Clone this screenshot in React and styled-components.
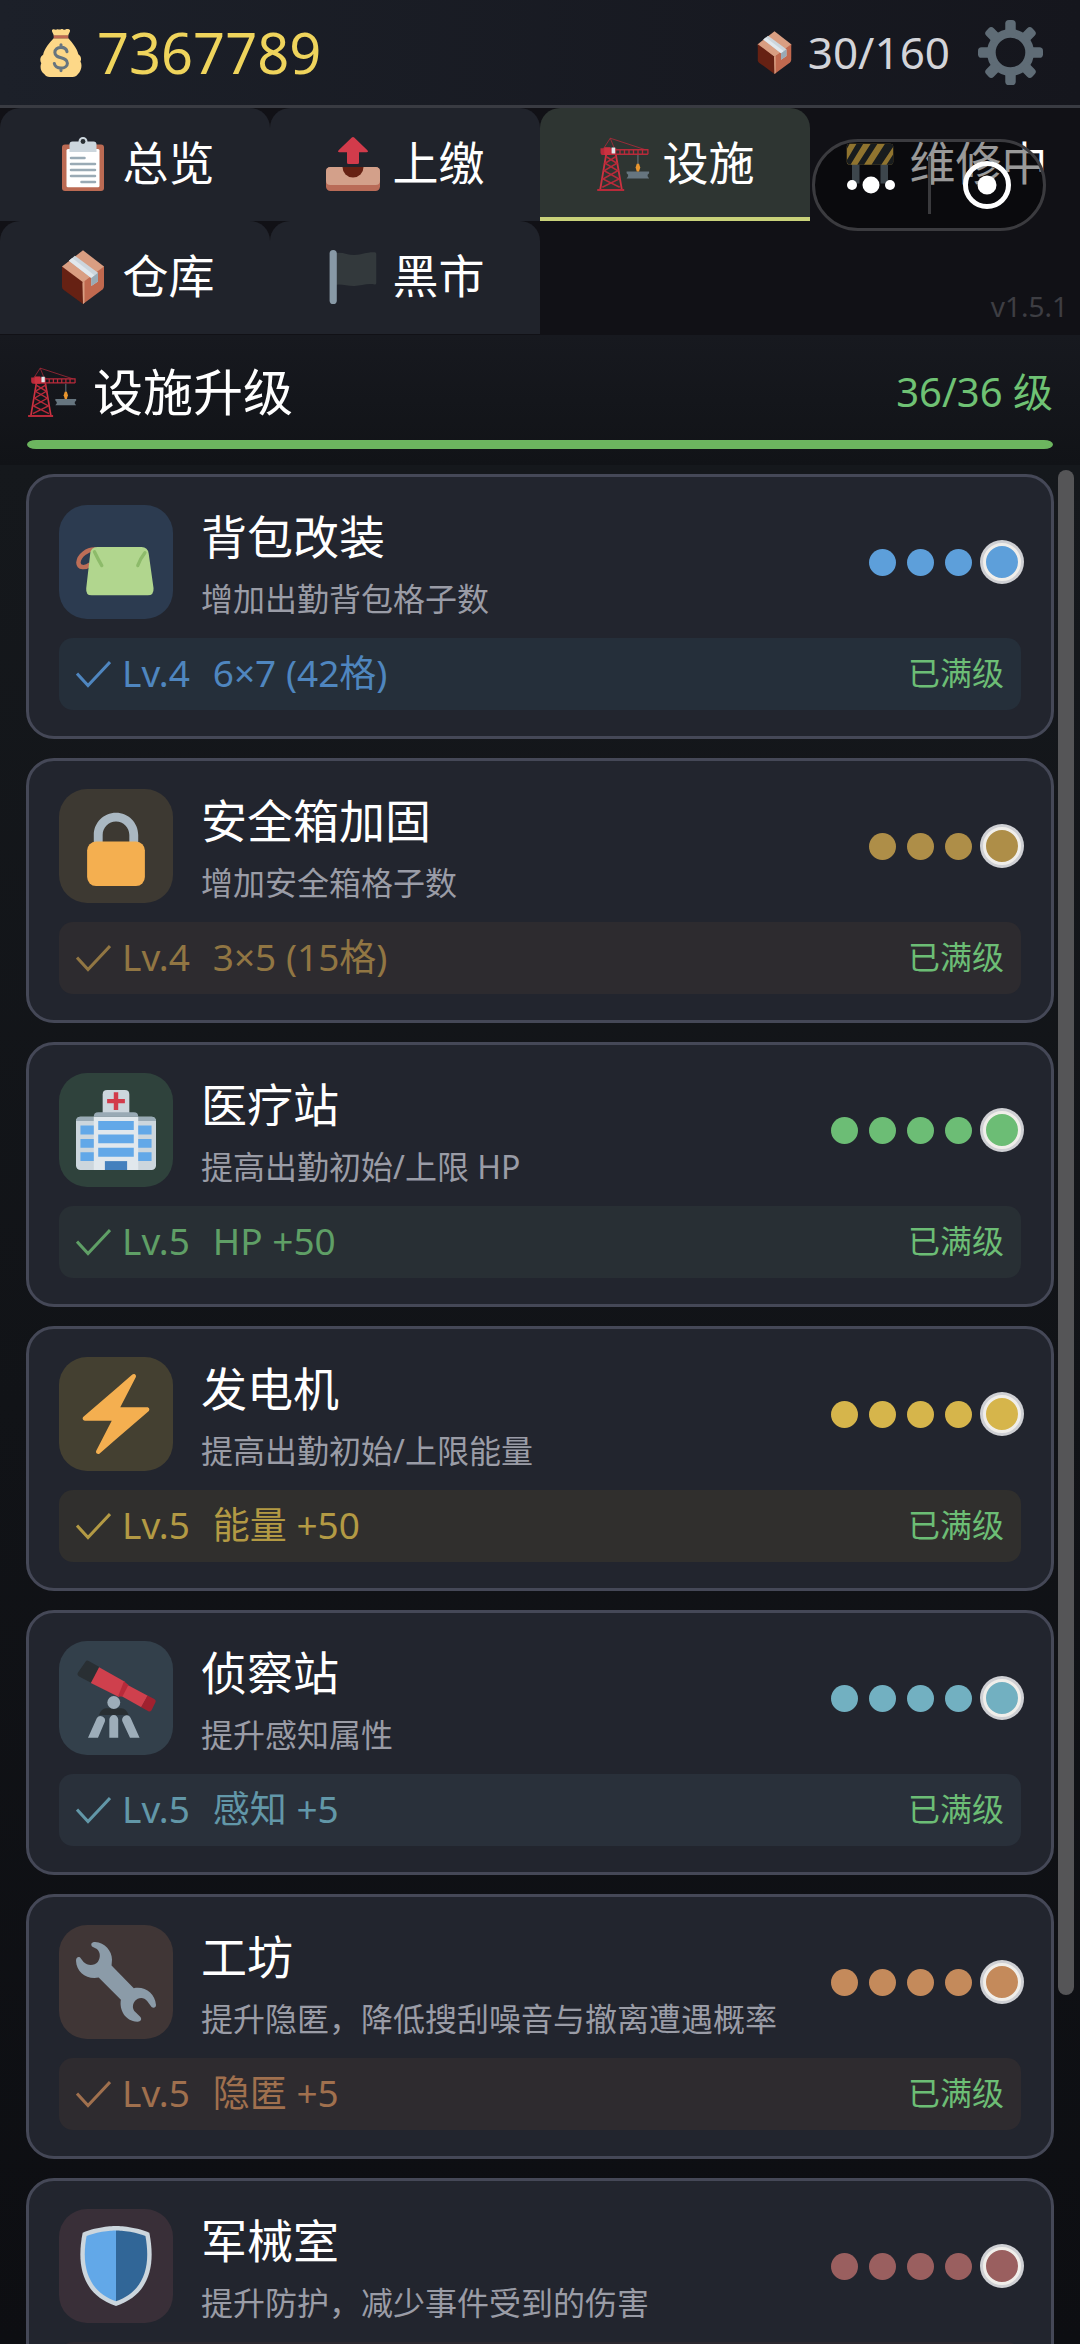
import React from "react";
import styled, { createGlobalStyle } from "styled-components";

const GlobalStyle = createGlobalStyle`
  * {
    box-sizing: border-box;
  }
  body {
    margin: 0;
    background: #111317;
    font-family: "Noto Sans", "Noto Sans CJK SC", sans-serif;
    color: #ffffff;
  }
  button {
    font-family: inherit;
    color: inherit;
    border: none;
    padding: 0;
    background: none;
    cursor: pointer;
  }
  svg {
    display: block;
    flex: none;
  }
`;

const Page = styled.div`
  position: relative;
  height: 100vh;
  display: flex;
  flex-direction: column;
  overflow: hidden;
`;

const Header = styled.header`
  height: 108px;
  flex: none;
  display: flex;
  align-items: center;
  justify-content: space-between;
  padding: 0 37px;
  border-bottom: 3px solid #393b42;
  background: linear-gradient(90deg, #1c2029, #15161d);
`;

const HeaderGroup = styled.div`
  display: flex;
  align-items: center;
  gap: 28px;
`;

const Stat = styled.div`
  display: flex;
  align-items: center;
  gap: 12px;
`;

const Money = styled.span`
  padding-bottom: 2px;
  font-size: 56px;
  line-height: 60px;
  color: #efd45c;
`;

const Capacity = styled.span`
  padding-bottom: 2px;
  font-size: 44px;
  line-height: 60px;
  color: #d3d4d9;
`;

const Tabs = styled.nav`
  flex: none;
  display: grid;
  grid-template-columns: repeat(4, 1fr);
  padding-bottom: 1px;
  background: #111116;
`;

const Tab = styled.button`
  height: 113px;
  display: flex;
  align-items: center;
  justify-content: center;
  gap: 13px;
  white-space: nowrap;
  padding-top: 2px;
  font-size: 46px;
  line-height: 60px;
  border-radius: 20px 20px 0 0;
  background: ${(p) => (p.$active ? "#2e3532" : p.$plain ? "none" : "#20232b")};
  border-bottom: 4px solid ${(p) => (p.$active ? "#c9d27a" : "transparent")};
`;

const TabLabel = styled.span`
  padding-bottom: 3px;
`;

const Version = styled.span`
  grid-column: 4;
  align-self: end;
  justify-self: end;
  padding: 0 12px 8px 0;
  font-size: 28px;
  line-height: 40px;
  color: #3e3e43;
`;

const Capsule = styled.div`
  position: absolute;
  top: 139px;
  right: 34px;
  width: 234px;
  height: 92px;
  display: flex;
  align-items: center;
  border: 3px solid #3b3b3f;
  border-radius: 46px;
  background: rgba(0, 0, 0, 0.4);
`;

const CapsuleButton = styled.button`
  flex: 1;
  display: flex;
  justify-content: center;
`;

const Divider = styled.span`
  width: 3px;
  height: 58px;
  background: #3a3a3d;
`;

const Section = styled.section`
  flex: none;
  padding: 22px 27px 16px;
  background: linear-gradient(#17191f, #111317);
`;

const SectionRow = styled.div`
  display: flex;
  align-items: center;
  gap: 16px;
  height: 70px;
  margin-bottom: 13px;
`;

const SectionTitle = styled.h1`
  flex: 1;
  margin: 0;
  font-size: 50px;
  line-height: 60px;
  font-weight: 400;
`;

const SectionCount = styled.span`
  font-size: 40px;
  line-height: 60px;
  color: #6fc274;
`;

const Track = styled.div`
  height: 9px;
  border-radius: 10px / 5px;
  background: #2c3036;
  overflow: hidden;
`;

const Fill = styled.div`
  height: 100%;
  background: #6cb55f;
`;

const Scroller = styled.main`
  flex: 1;
  min-height: 0;
  display: flex;
  background: linear-gradient(#15181c, #0d0e12);
`;

const List = styled.div`
  flex: 1;
  display: flex;
  flex-direction: column;
  gap: 19px;
  padding: 9px 4px 24px 26px;
  overflow-y: auto;
  scrollbar-width: none;
`;

const Rail = styled.div`
  width: 22px;
  padding: 5px 6px 0 0;
`;

const Thumb = styled.div`
  height: 81.4%;
  border-radius: 8px;
  background: #555557;
`;

const Card = styled.article`
  flex: none;
  padding: 28px 30px 26px;
  border: 3px solid #454857;
  border-radius: 28px;
  background: #22252e;
`;

const CardTop = styled.div`
  display: flex;
  align-items: center;
  gap: 28px;
  height: 114px;
  margin-bottom: 19px;
`;

const Tile = styled.div`
  width: 114px;
  height: 114px;
  flex: none;
  display: flex;
  align-items: center;
  justify-content: center;
  border-radius: 28px;
  background: ${(p) => p.$bg};
`;

const CardText = styled.div`
  flex: 1;
  min-width: 0;
  padding-top: 8px;
`;

const CardTitle = styled.h2`
  margin: 0 0 8px;
  font-size: 46px;
  line-height: 58px;
  font-weight: 400;
`;

const CardDesc = styled.p`
  margin: 0;
  font-size: 32px;
  line-height: 52px;
  white-space: nowrap;
  color: #9a9ca6;
`;

const Dots = styled.div`
  display: flex;
  align-items: center;
  gap: 11px;
`;

const Dot = styled.span`
  width: ${(p) => (p.$last ? 38 : 27)}px;
  height: ${(p) => (p.$last ? 38 : 27)}px;
  border-radius: 50%;
  background: ${(p) => p.$color};
  ${(p) =>
    p.$last &&
    `
    border: 3px solid #f0eeea;
    box-shadow: 0 0 0 3px #cfd0d4;
  `}
`;

const Level = styled.div`
  height: 72px;
  display: flex;
  align-items: center;
  padding: 0 17px;
  gap: 11px;
  border-radius: 14px;
  font-size: 37px;
  line-height: 48px;
  color: ${(p) => p.$color};
  background: ${(p) => p.$bg};
`;

const LevelText = styled.span`
  padding-bottom: 2px;
`;

const Effect = styled(LevelText)`
  flex: 1;
  padding-left: 12px;
`;

const Maxed = styled(LevelText)`
  font-size: 32px;
  color: #6cbd75;
`;

const Emoji = ({ size, children }) => (
  <svg width={size} height={size} viewBox="0 0 36 36" aria-hidden="true">
    {children}
  </svg>
);

const MoneyBag = ({ size }) => (
  <Emoji size={size}>
    <path
      fill="#FDD888"
      d="M11.5 0.6c1.2-1 2.2.6 3.2-.2s2 .4 3.3-.2 2.200 1 3.300.2 2.200-.6 3.200.2c1 1-.8 2.600-1.100 4.400H12.600C12.300 3.200 10.500 1.700 11.500.6zM12.500 7h11c3 3.400 6.500 7.400 7.500 12 1.800 1.200 2.600 3.200 1.600 5.400 1.600 3 .6 7.200-2 9.600-1 1.300-2 2-4 2H9.600c-2 0-3-.7-4-2-2.800-2-3.600-5.600-2.400-8.400-1.400-2.200-.7-5 1.400-6.200C5.500 14.600 9.500 10.400 12.500 7z"
    />
    <path fill="#BF6952" d="M12.500 4.800h11v2.200h-11z" />
    <path
      fill="none"
      stroke="#67757F"
      strokeWidth="2.300"
      strokeLinecap="round"
      d="M22.500 17c-.4-2-2.200-3.200-4.500-3.200-2.600 0-4.600 1.500-4.600 3.800 0 5.400 9.400 2.600 9.400 8 0 2.300-2.200 3.700-4.800 3.700-2.500 0-4.500-1.100-5-3.400M18 11.800v2M18 29.400v1.800"
    />
  </Emoji>
);

const Package = ({ size }) => (
  <Emoji size={size}>
    <path fill="#D99E82" d="M18 0.200 32 11v1L18 22 4 12v-1z" />
    <path fill="#662113" d="M4 11l14 10.500V36L5 26.500q-1-.8-1-2z" />
    <path fill="#C1694F" d="M32 11v13q0 1.500-1 2.300L18 36V21.500z" />
    <path fill="#D99E82" d="M17.600 21.600 19 20.700V35.200l-1 .8z" />
    <path fill="#CCD6DD" d="M8.600 7.200l4-3.300L28 15.200v5.800l-4.500 3v-5.300z" />
    <path fill="#E1E8ED" d="M8.600 7.200 10.800 5.400l15 11.600-2.300 1.700z" />
    <path fill="#99AAB5" d="M23.500 18.700 28 15.200v5.800l-4.500 3z" />
  </Emoji>
);

const teeth = [0, 45, 90, 135, 180, 225, 270, 315];

const Gear = ({ size }) => (
  <Emoji size={size}>
    <circle cx="18" cy="18" r="10.600" fill="none" stroke="#5F6C76" strokeWidth="4.800" />
    {teeth.map((deg) => (
      <rect
        key={deg}
        x="15.100"
        y="0"
        width="5.800"
        height="8"
        rx="2"
        fill="#5F6C76"
        transform={`rotate(${deg} 18 18)`}
      />
    ))}
  </Emoji>
);

const Clipboard = ({ size }) => (
  <Emoji size={size}>
    <rect x="4" y="5" width="28" height="31" rx="2" fill="#BB6A53" />
    <rect x="7" y="8" width="22" height="25.500" rx="1" fill="#fff" />
    <path fill="#CCD6DD" d="M11 3h4a3 3 0 0 1 6 0h4q2 0 2 2v5H9V5q0-2 2-2z" />
    <circle cx="18" cy="3" r="1.600" fill="#292F33" />
    <path
      stroke="#99AAB5"
      strokeWidth="1.700"
      strokeLinecap="round"
      d="M10 14h9M10 18h16M10 22h16M10 26h16M17 30h9"
    />
  </Emoji>
);

const Outbox = ({ size }) => (
  <Emoji size={size}>
    <rect x="0" y="20" width="36" height="16" rx="3" fill="#B96B57" />
    <path fill="#D3A08A" d="M3 20h30q3 0 3 3v6q0 3-3 3H3q-3 0-3-3v-6q0-3 3-3z" />
    <path fill="#662113" d="M11 20h14a7 7 0 0 1-14 0z" />
    <path
      fill="#D23B4B"
      d="M17.200.4q.8-.7 1.600 0l8.800 8.400q1 1.400-.6 1.400H22V17q0 1-1 1h-6q-1 0-1-1v-6.800H9q-1.600 0-.6-1.400z"
    />
  </Emoji>
);

const Crane = ({ size }) => (
  <Emoji size={size}>
    <path
      fill="none"
      stroke="#B82A3A"
      strokeWidth=".5"
      d="M4.500 8.500 9.500.8 33 8.500M9.500.8 12 7"
    />
    <path
      fill="none"
      stroke="#CC3240"
      strokeWidth="1.200"
      d="M6.800 11.500 2.800 35M13.200 11.500 17.200 35"
    />
    <path
      fill="none"
      stroke="#B82A3A"
      strokeWidth="1"
      d="M6.600 13 14 17.500 5.400 22.500 15.400 28 4.200 33.500M13.400 13 6 17.500 14.600 22.500 4.600 28 15.800 33.500"
    />
    <path fill="#B82A3A" d="M.8 34.600h18V36H.8zM3 7.500h10.500V12H4.300Q3 12 3 10.500z" />
    <path
      fill="none"
      stroke="#B82A3A"
      strokeWidth=".9"
      d="M13 8.500h22M13 11.500h21.600M16 8.500v3M19 8.500v3M22 8.500v3M25 8.500v3M28 8.500v3M31 8.500v3M34.600 8.500v3"
    />
    <path fill="#CC3240" d="M5.500 6.800h4.200v5.200H5.500z" />
    <path fill="#E1E8ED" d="M10.400 7h2.400v4h-2.400z" />
    <path fill="#66757F" d="M27.600 12h.7v7h-.7zM20.400 23h15v1.200l-1 1v1l1 1.400H20.400l1-1.400v-1l-1-1z" />
    <path fill="#E8952E" d="M27.200 17.800h1.500l.8 2.600-.8 2.600h-1.500l-.8-2.600z" />
  </Emoji>
);

const Barrier = ({ size }) => (
  <Emoji size={size}>
    <path fill="#66757F" d="M6 16h5v15H6zM25 16h5v15h-5z" />
    <rect x="2.500" y="4.500" width="31" height="14" rx="2" fill="#F0C24F" />
    <path
      fill="#292F33"
      d="M9 4.500h4.500L5 18.500q-2.500 0-2.500-3zM18.500 4.500H23l-9 14H9.500zM28 4.500h3.500q2 0 2 2l-8 12H19zM33.500 11.500v5q0 2-2 2H29zM2.500 6.500q0-2 2-2L2.500 8z"
    />
  </Emoji>
);

const Flag = ({ size }) => (
  <Emoji size={size}>
    <path
      fill="#33393C"
      d="M5 2.500c5-2 9 .9 14 .8 5-.2 8-2 13.500-1.800q1 0 1 1V22q0 1-1 1c-5-1-9 .8-13.500 1-5 .2-9-2-14-.6z"
    />
    <rect x="2.400" y="0" width="4.800" height="36" rx="2.400" fill="#8899A6" />
  </Emoji>
);

const Pouch = ({ size }) => (
  <Emoji size={size}>
    <path
      fill="none"
      stroke="#BD6E57"
      strokeWidth="2"
      d="M9 12.400C5 12 1.300 15.200 1.100 18.200c-.1 2.700 3.200 2.600 5.400.8"
    />
    <path
      fill="#B1D68E"
      d="M9.500 11.200h20q2.800 0 3.200 3l2.200 15.600q.2 3.200-2.600 3.200H7q-2.700 0-2.400-3.200L6.400 14.200q.3-3 3.100-3z"
    />
    <path
      fill="none"
      stroke="#8DBB6A"
      strokeWidth="1.500"
      strokeLinecap="round"
      d="M8.300 13.400q1.700 3.600 3.300 6.200M31 13.800q-2.200 2.800-3.200 5.800"
    />
  </Emoji>
);

const Lock = ({ size }) => (
  <Emoji size={size}>
    <path
      fill="#AAB8C2"
      d="M18 3C12.477 3 8 7.477 8 13v10h4V13c0-3.313 2.686-6 6-6s6 2.687 6 6v10h4V13c0-5.523-4.477-10-10-10z"
    />
    <rect x="5" y="16" width="26" height="20" rx="4" fill="#F4AF50" />
  </Emoji>
);

const Hospital = ({ size }) => (
  <Emoji size={size}>
    <rect x="0" y="12" width="36" height="24" rx="2" fill="#CCD6DD" />
    <path fill="#99AAB5" d="M2 12h32q2 0 2 2H0q0-2 2-2z" />
    <path fill="#CCD6DD" d="M14 0h8q2 0 2 2v9H12V2q0-2 2-2z" />
    <path fill="#E1E8ED" d="M8 12h20v24H8z" />
    <path fill="#99AAB5" d="M10 10h16q2 0 2 2H8q0-2 2-2z" />
    <path fill="#D23B4B" d="M17 1h2v3h3v2h-3v3h-2V6h-3V4h3z" />
    <path
      fill="#62A8E8"
      d="M10 14h16v4H10zM10 20h16v4H10zM10 26h16v4H10zM2 16h6v4H2zM2 22h6v4H2zM2 28h6v4H2zM28 16h6v4h-6zM28 22h6v4h-6zM28 28h6v4h-6z"
    />
    <path fill="#4480BD" d="M13 32h10v4H13z" />
  </Emoji>
);

const Bolt = ({ size }) => (
  <Emoji size={size}>
    <path
      fill="#F4AF50"
      d="M32.938 15.651C32.792 15.260 32.418 15 32 15H19.925L26.890 1.458c.219-.426.106-.947-.271-1.243C26.437.071 26.218 0 26 0c-.233 0-.466.082-.653.243L18 6.588 3.347 19.243c-.316.273-.43.714-.284 1.105S3.582 21 4 21h12.075L9.110 34.542c-.219.426-.106.947.271 1.243.182.144.401.215.619.215.233 0 .466-.082.653-.243L18 29.412l14.653-12.655c.317-.273.43-.714.285-1.106z"
    />
  </Emoji>
);

const Telescope = ({ size }) => (
  <Emoji size={size}>
    <path fill="#292F33" d="M13.500 22.600h7q2 0 3.200 3H10.300q1.200-3 3.200-3z" />
    <path fill="#292F33" d="M4.200 1.800q.5-1 1.500-.5L10.600 4 7 11.300 1.600 8.400Q.2 7.600.9 6.500z" />
    <path fill="#CF404D" d="M10.400 4.200 22 10.700l-2.700 6.900L6.700 11.200z" />
    <path fill="#CF404D" d="M22.600 11.800 32.300 17l-2.900 5.200-9-5.100z" />
    <path fill="#A0212F" d="M32.200 16.900l3 1.500q1 .6.500 1.600l-1.700 3.500q-.6 1-1.600.4l-3.100-1.700z" />
    <path fill="#B82A3A" d="M21.600 10.500 23.600 12.200 20.900 17.300 18.900 17.300z" />
    <circle cx="17" cy="20" r="2.900" fill="#9DADB9" />
    <path
      fill="#9DADB9"
      d="M15 35.900V27.700a2 2 0 0 1 4 0v8.200zM5.400 35.900 9.400 27a2 2 0 0 1 3.600 1.600L9.900 35.900zM28.600 35.900 24.600 27a2 2 0 0 0-3.700 1.600l3.400 7.300z"
    />
  </Emoji>
);

const Wrench = ({ size }) => (
  <Emoji size={size}>
    <path
      fill="#8B9BA8"
      d="M8.600 0C13 .3 16.200 4 16.200 8L16 10.600 26 20.800C31 19.800 35.600 23 36 28.400 36 29.600 34.800 29.900 34 29.200L32 26.600C30.500 24.400 27.800 25 26.600 26.400 25 28.400 25.600 30.400 26.600 31.400L29 33.800C29.800 35 29 36 27.600 35.900 22 35.600 19.400 30.400 20.200 26L10.200 16C4.800 17 .2 13.600 0 8.400 0 6.800 1.400 6.200 2.200 7.400L3.400 9C5.400 11 8.400 10.600 9.800 9 11.200 7 11 4.600 9.400 3.200L7.200 2C6.400.8 7.200 0 8.600 0z"
    />
  </Emoji>
);

const Shield = ({ size }) => (
  <Emoji size={size}>
    <path fill="#CCD6DD" d="M33 3c-7-3-15-3-15-3S10 0 3 3C0 18 3 31 18 36c15-5 18-18 15-33z" />
    <path
      fill="#62A8E8"
      d="M18 33.884C6.412 29.729 1.961 19.831 4.760 4.444 11.063 2.029 17.928 2 18 2z"
    />
    <path
      fill="#316697"
      d="M31.239 4.444C24.966 2.025 18.140 2.001 18.070 2H18v31.884c11.588-4.155 16.039-14.053 13.239-29.440z"
    />
  </Emoji>
);

const Check = () => (
  <svg width="35" height="35" viewBox="0 0 35 35" aria-hidden="true">
    <path d="M1 16.500 12 28.500 34 5" fill="none" stroke="currentColor" strokeWidth="3" />
  </svg>
);

const More = () => (
  <svg width="48" height="18" viewBox="0 0 48 18" fill="#fff" aria-hidden="true">
    <circle cx="5" cy="9" r="5" />
    <circle cx="24" cy="9" r="8.500" />
    <circle cx="43" cy="9" r="5" />
  </svg>
);

const Target = () => (
  <svg width="48" height="48" viewBox="0 0 48 48" aria-hidden="true">
    <circle cx="24" cy="24" r="21.500" fill="none" stroke="#fff" strokeWidth="5" />
    <circle cx="24" cy="24" r="9.500" fill="#fff" />
  </svg>
);

const tabs = [
  { label: "总览", icon: Clipboard },
  { label: "上缴", icon: Outbox },
  { label: "设施", icon: Crane, active: true },
  { label: "维修中", icon: Barrier, plain: true },
  { label: "仓库", icon: Package },
  { label: "黑市", icon: Flag },
];

const facilities = [
  {
    name: "背包改装",
    desc: "增加出勤背包格子数",
    icon: Pouch,
    level: 4,
    effect: "6×7 (42格)",
    tile: "#2c3b50",
    bar: "#252f3a",
    dot: "#5d9fda",
    text: "#4f86bf",
  },
  {
    name: "安全箱加固",
    desc: "增加安全箱格子数",
    icon: Lock,
    level: 4,
    effect: "3×5 (15格)",
    tile: "#3d3932",
    bar: "#2d2b2f",
    dot: "#ae8e48",
    text: "#917643",
  },
  {
    name: "医疗站",
    desc: "提高出勤初始/上限 HP",
    icon: Hospital,
    level: 5,
    effect: "HP +50",
    tile: "#2f423c",
    bar: "#282f34",
    dot: "#6cbd75",
    text: "#5f9f66",
  },
  {
    name: "发电机",
    desc: "提高出勤初始/上限能量",
    icon: Bolt,
    level: 5,
    effect: "能量 +50",
    tile: "#444031",
    bar: "#302f2d",
    dot: "#d6b54b",
    text: "#b39a44",
  },
  {
    name: "侦察站",
    desc: "提升感知属性",
    icon: Telescope,
    level: 5,
    effect: "感知 +5",
    tile: "#33404b",
    bar: "#29303a",
    dot: "#72b0c1",
    text: "#6297a8",
  },
  {
    name: "工坊",
    desc: "提升隐匿，降低搜刮噪音与撤离遭遇概率",
    icon: Wrench,
    level: 5,
    effect: "隐匿 +5",
    tile: "#403636",
    bar: "#2e2b2f",
    dot: "#c48a5b",
    text: "#a0704e",
  },
  {
    name: "军械室",
    desc: "提升防护，减少事件受到的伤害",
    icon: Shield,
    level: 5,
    effect: "防护 +5",
    tile: "#392f38",
    bar: "#2b282f",
    dot: "#9a5f5f",
    text: "#8a5757",
  },
];

const Facility = ({ item }) => {
  const Icon = item.icon;
  return (
    <Card>
      <CardTop>
        <Tile $bg={item.tile}>
          <Icon size={80} />
        </Tile>
        <CardText>
          <CardTitle>{item.name}</CardTitle>
          <CardDesc>{item.desc}</CardDesc>
        </CardText>
        <Dots>
          {Array.from({ length: item.level }, (_, i) => (
            <Dot key={i} $color={item.dot} $last={i === item.level - 1} />
          ))}
        </Dots>
      </CardTop>
      <Level $color={item.text} $bg={item.bar}>
        <Check />
        <LevelText>Lv.{item.level}</LevelText>
        <Effect>{item.effect}</Effect>
        <Maxed>已满级</Maxed>
      </Level>
    </Card>
  );
};

const App = () => {
  return (
    <Page>
      <GlobalStyle />
      <Header>
        <Stat>
          <MoneyBag size={48} />
          <Money>7367789</Money>
        </Stat>
        <HeaderGroup>
          <Stat>
            <Package size={43} />
            <Capacity>30/160</Capacity>
          </Stat>
          <button aria-label="设置">
            <Gear size={65} />
          </button>
        </HeaderGroup>
      </Header>
      <Tabs>
        {tabs.map(({ label, icon: Icon, active, plain }) => (
          <Tab key={label} $active={active} $plain={plain}>
            <Icon size={54} />
            <TabLabel>{label}</TabLabel>
          </Tab>
        ))}
        <Version>v1.5.1</Version>
      </Tabs>
      <Section>
        <SectionRow>
          <Crane size={50} />
          <SectionTitle>设施升级</SectionTitle>
          <SectionCount>36/36 级</SectionCount>
        </SectionRow>
        <Track>
          <Fill />
        </Track>
      </Section>
      <Scroller>
        <List>
          {facilities.map((item) => (
            <Facility key={item.name} item={item} />
          ))}
        </List>
        <Rail>
          <Thumb />
        </Rail>
      </Scroller>
      <Capsule>
        <CapsuleButton aria-label="更多">
          <More />
        </CapsuleButton>
        <Divider />
        <CapsuleButton aria-label="关闭">
          <Target />
        </CapsuleButton>
      </Capsule>
    </Page>
  );
};

export default App;
